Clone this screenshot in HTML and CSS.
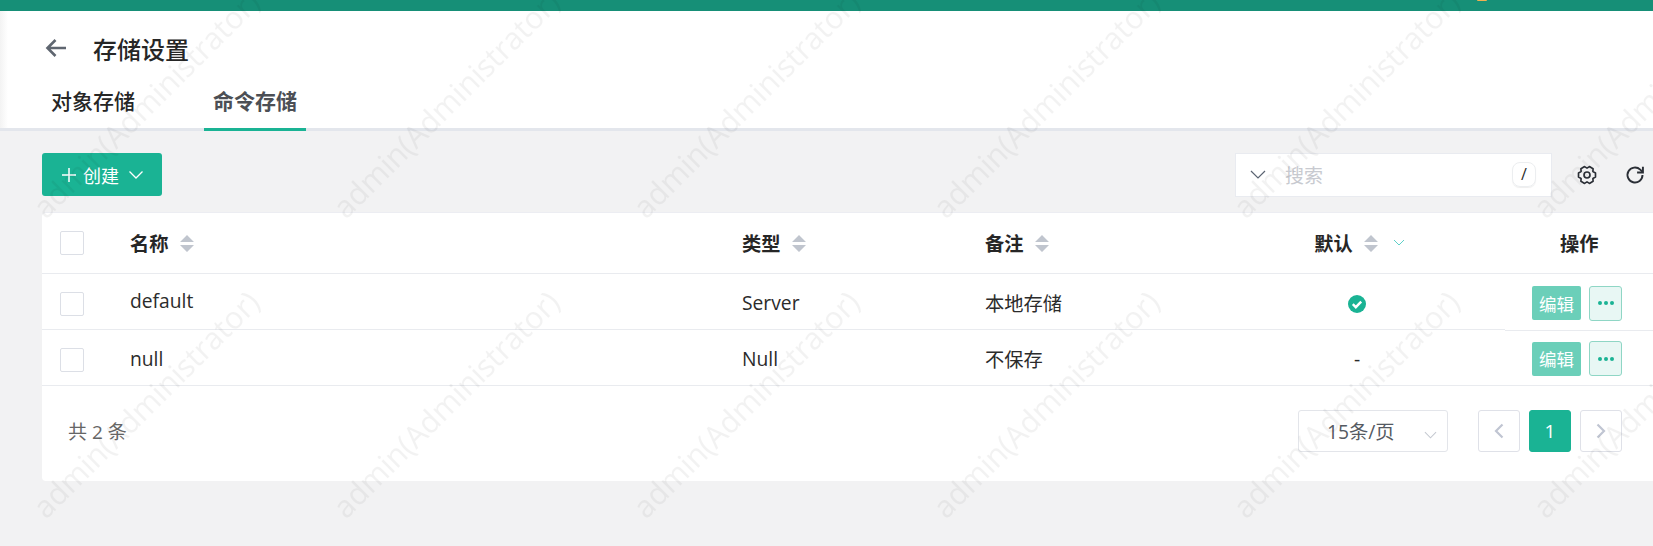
FILE: index.html
```html
<!DOCTYPE html>
<html lang="zh">
<head>
<meta charset="utf-8">
<title>存储设置</title>
<link rel="stylesheet" href="styles.css">
</head>
<body>
<div class="topbar"><span class="avatar"></span></div>
<header class="head">
  <div class="title-row">
    <svg class="back" viewBox="0 0 24 24" width="24" height="24"><path d="M22 12H4M11.500 4l-8 8 8 8" fill="none" stroke="#5f6670" stroke-width="2.600"/></svg>
    <h1 class="title">存储设置</h1>
  </div>
  <nav class="tabs">
    <a class="tab">对象存储</a>
    <a class="tab active">命令存储</a>
  </nav>
</header>
<main class="content">
  <div class="toolbar">
    <button class="create">
      <svg viewBox="0 0 16 16" width="16" height="16"><path d="M8 1v14M1 8h14" stroke="#fff" stroke-width="1.500" fill="none"/></svg>
      <span>创建</span>
      <svg viewBox="0 0 14 14" width="14" height="14"><path d="M.5 3.500l6.500 6.500 6.500-6.500" stroke="#fff" stroke-width="1.300" fill="none"/></svg>
    </button>
    <div class="search">
      <svg viewBox="0 0 16 10" width="16" height="10"><path d="M1 1l7 7 7-7" stroke="#5b6472" stroke-width="1.200" fill="none"/></svg>
      <span class="placeholder">搜索</span>
      <kbd class="slash">/</kbd>
    </div>
    <svg class="tool" viewBox="0 0 24 24" width="20" height="20"><path d="M19.100 7.900L22.190 9.460V14.540L19.100 16.100L19.290 19.550L14.890 22.090L12 20.200L9.110 22.090L4.710 19.550L4.900 16.100L1.810 14.540V9.460L4.900 7.900L4.710 4.450L9.110 1.910L12 3.800L14.890 1.910L19.290 4.450Z" fill="none" stroke="#2b2f36" stroke-width="2" stroke-linejoin="round"/><circle cx="12" cy="12" r="3.600" fill="none" stroke="#2b2f36" stroke-width="2"/></svg>
    <svg class="tool tool-refresh" viewBox="0 0 24 24" width="20" height="20"><path d="M21 12a9 9 0 1 1-2.700-6.400L21 8.200" fill="none" stroke="#2b2f36" stroke-width="2.300"/><path d="M21.500 2v7h-7" fill="none" stroke="#2b2f36" stroke-width="2.300"/></svg>
  </div>
  <section class="card">
    <div class="row row-head">
      <div class="c-check"><span class="box"></span></div>
      <div class="c-name th">名称<svg class="sort" viewBox="0 0 14 17" width="14" height="17"><path d="M7 0l7 7H0zM7 17l7-7H0z" fill="#c0c5ce"/></svg></div>
      <div class="c-type th">类型<svg class="sort" viewBox="0 0 14 17" width="14" height="17"><path d="M7 0l7 7H0zM7 17l7-7H0z" fill="#c0c5ce"/></svg></div>
      <div class="c-note th">备注<svg class="sort" viewBox="0 0 14 17" width="14" height="17"><path d="M7 0l7 7H0zM7 17l7-7H0z" fill="#c0c5ce"/></svg></div>
      <div class="c-def th">默认<svg class="sort" viewBox="0 0 14 17" width="14" height="17"><path d="M7 0l7 7H0zM7 17l7-7H0z" fill="#c0c5ce"/></svg><svg class="filter" viewBox="0 0 12 8" width="12" height="8"><path d="M1 1l5 5 5-5" stroke="#5fd0c8" stroke-width="1" fill="none"/></svg></div>
      <div class="c-ops th ops-head">操作</div>
    </div>
    <div class="row row-data row-first">
      <div class="c-check"><span class="box"></span></div>
      <div class="c-name name-up">default</div>
      <div class="c-type">Server</div>
      <div class="c-note">本地存储</div>
      <div class="c-def"><svg class="ok" viewBox="0 0 18 18" width="18" height="18"><circle cx="9" cy="9" r="9" fill="#1ab394"/><path d="M4.800 9.200l3 3 5.400-5.600" stroke="#fff" stroke-width="2.400" fill="none"/></svg></div>
      <div class="c-ops ops-cell"><button class="edit">编辑</button><button class="more"><i></i><i></i><i></i></button></div>
    </div>
    <div class="row row-data">
      <div class="c-check"><span class="box"></span></div>
      <div class="c-name">null</div>
      <div class="c-type">Null</div>
      <div class="c-note">不保存</div>
      <div class="c-def">-</div>
      <div class="c-ops ops-cell"><button class="edit">编辑</button><button class="more"><i></i><i></i><i></i></button></div>
    </div>
    <footer class="foot">
      <span class="total">共 2 条</span>
      <div class="size">15条/页<svg viewBox="0 0 14 8" width="13" height="8"><path d="M1 1l6 6 6-6" stroke="#c4c8d0" stroke-width="1.100" fill="none"/></svg></div>
      <button class="pg"><svg viewBox="0 0 10 16" width="10" height="16"><path d="M8.500 1.500L2 8l6.500 6.500" stroke="#c0c5d2" stroke-width="2.200" fill="none"/></svg></button>
      <button class="pg current">1</button>
      <button class="pg"><svg viewBox="0 0 10 16" width="10" height="16"><path d="M1.500 1.500L8 8l-6.500 6.500" stroke="#c0c5d2" stroke-width="2.200" fill="none"/></svg></button>
    </footer>
  </section>
</main>
<svg class="watermark" width="1653" height="546">
  <defs>
    <pattern id="wm" x="6" y="-20" width="300" height="300" patternUnits="userSpaceOnUse">
      <text class="wm-text" x="40" y="240" transform="rotate(-45 40 240)">admin(Administrator)</text>
    </pattern>
  </defs>
  <rect width="1653" height="546" fill="url(#wm)"/>
</svg>
</body>
</html>
```
FILE: styles.css
```css
* { box-sizing: border-box; }
html, body { margin: 0; height: 546px; overflow: hidden; }
body {
  position: relative;
  width: 1653px;
  background: #f2f2f3;
  color: #2b2b2b;
  font-family: "Open Sans", "Noto Sans CJK SC", sans-serif;
  font-size: 19.25px;
}
button { font-family: inherit; padding: 0; cursor: pointer; }

.topbar { height: 11px; background: #168f77; overflow: hidden; display: flex; padding-left: 1477px; }
.avatar { width: 10px; height: 1px; background: #f0b050; border-radius: 0 0 5px 5px; }

.head { height: 120px; background: linear-gradient(90deg, #f3f3f3 0, #fff 8px); border-bottom: 3px solid #e3e6ec; display: flex; flex-direction: column; }
.title-row { display: flex; align-items: center; height: 69px; padding: 5px 0 0 44px; }
.back { display: block; }
.title { margin: 0 0 0 25px; font-size: 24px; font-weight: 500; color: #262626; }
.tabs { display: flex; margin-bottom: -3px; flex: 1; padding-left: 42px; }
.tab { width: 102px; text-align: center; font-size: 21px; font-weight: 500; color: #262626; padding-top: 5px; margin-right: 60px; }
.tab.active { color: #4c4f55; border-bottom: 3px solid #1ab394; font-weight: 600; }

.content { padding: 22px 0 0 42px; }
.toolbar { display: flex; align-items: center; height: 43px; margin-bottom: 16px; }
.create { display: flex; align-items: center; gap: 6px; width: 120px; height: 43px; padding-left: 19px; border: 0; border-radius: 3px; background: #1ab394; color: #fff; font-size: 18px; }
.create svg:last-child { margin-left: 4px; }
.search { display: flex; align-items: center; width: 317px; height: 44px; margin-left: 1073px; padding: 0 15px 0 14px; background: #fff; border: 1px solid #e9ebf0; }
.placeholder { flex: 1; margin-left: 19px; color: #c8cad0; font-size: 19px; }
.slash { width: 24px; height: 25px; border: 1px solid #eceef0; border-radius: 8px; text-align: center; font: 16px/23px "Open Sans", sans-serif; color: #2b2b2b; box-shadow: 0 1px 1px #eee; }
.tool { margin-left: 25px; flex: none; }
.tool-refresh { margin-left: 28px; }

.card { background: #fff; border-radius: 4px 0 0 4px; height: 269px; width: 1611px; border-top: 1px solid #ecedf2; }
.row { display: grid; grid-template-columns: 88px 612px 243px 261px 1fr 148px; align-items: center; height: 56px; border-bottom: 1px solid #e9ebef; }
.row-head { height: 61px; }
.row-data { padding-top: 2px; }
.c-check { padding-left: 18px; display: flex; }
.row-data .c-check { margin-top: 3px; }
.box { width: 24px; height: 24px; border: 1px solid #dcdfe6; border-radius: 2px; background: #fff; }
.th { font-size: 19.25px; font-weight: 700; color: #262626; display: flex; align-items: center; }
.sort { margin-left: 11px; flex: none; }
.filter { margin-left: 15px; flex: none; }
.c-def { text-align: center; display: flex; justify-content: center; align-items: center; padding-right: 37px; }
.row-head .c-def { padding-right: 32px; }
.ok { margin-top: 2px; }
.name-up { position: relative; top: -2px; }
.ops-head { padding-left: 55px; }
.ops-cell { display: flex; align-items: center; gap: 8px; padding-left: 27px; }
.row-first .ops-cell { align-self: stretch; margin-bottom: -2px; background: #fff; border-bottom: 1px solid #e9ebef; position: relative; }
.edit { width: 49px; height: 34px; border: 0; border-radius: 2px; background: #6bcfb9; color: #fff; font-size: 17.500px; }
.more { display: flex; align-items: center; justify-content: center; gap: 2px; width: 33px; height: 35px; border: 1px solid #8fd6c5; border-radius: 3px; background: #e8f7f4; }
.more i { width: 4px; height: 4px; border-radius: 50%; background: #1ab394; }

.foot { display: flex; align-items: center; height: 95px; padding: 0 31px 6px 26px; }
.total { flex: 1; color: #666; font-size: 19px; }
.size { display: flex; align-items: center; justify-content: space-between; width: 150px; height: 42px; padding: 0 10px 0 28px; border: 1px solid #e3e5ea; border-radius: 3px; color: #555a62; font-size: 19.25px; margin-right: 30px; }
.size svg { margin-top: 8px; }
.pg { display: flex; align-items: center; justify-content: center; width: 42px; height: 42px; margin-right: 9px; background: #fff; border: 1px solid #dfe1e8; border-radius: 3px; }
.pg:last-child { margin-right: 0; }
.pg.current { background: #1ab394; border-color: #1ab394; color: #fff; font-size: 19px; }

.watermark { position: absolute; left: 0; top: 0; pointer-events: none; }
.wm-text { font-family: "Open Sans", sans-serif; font-size: 30.500px; fill: rgba(0, 0, 0, 0.05); }
```
